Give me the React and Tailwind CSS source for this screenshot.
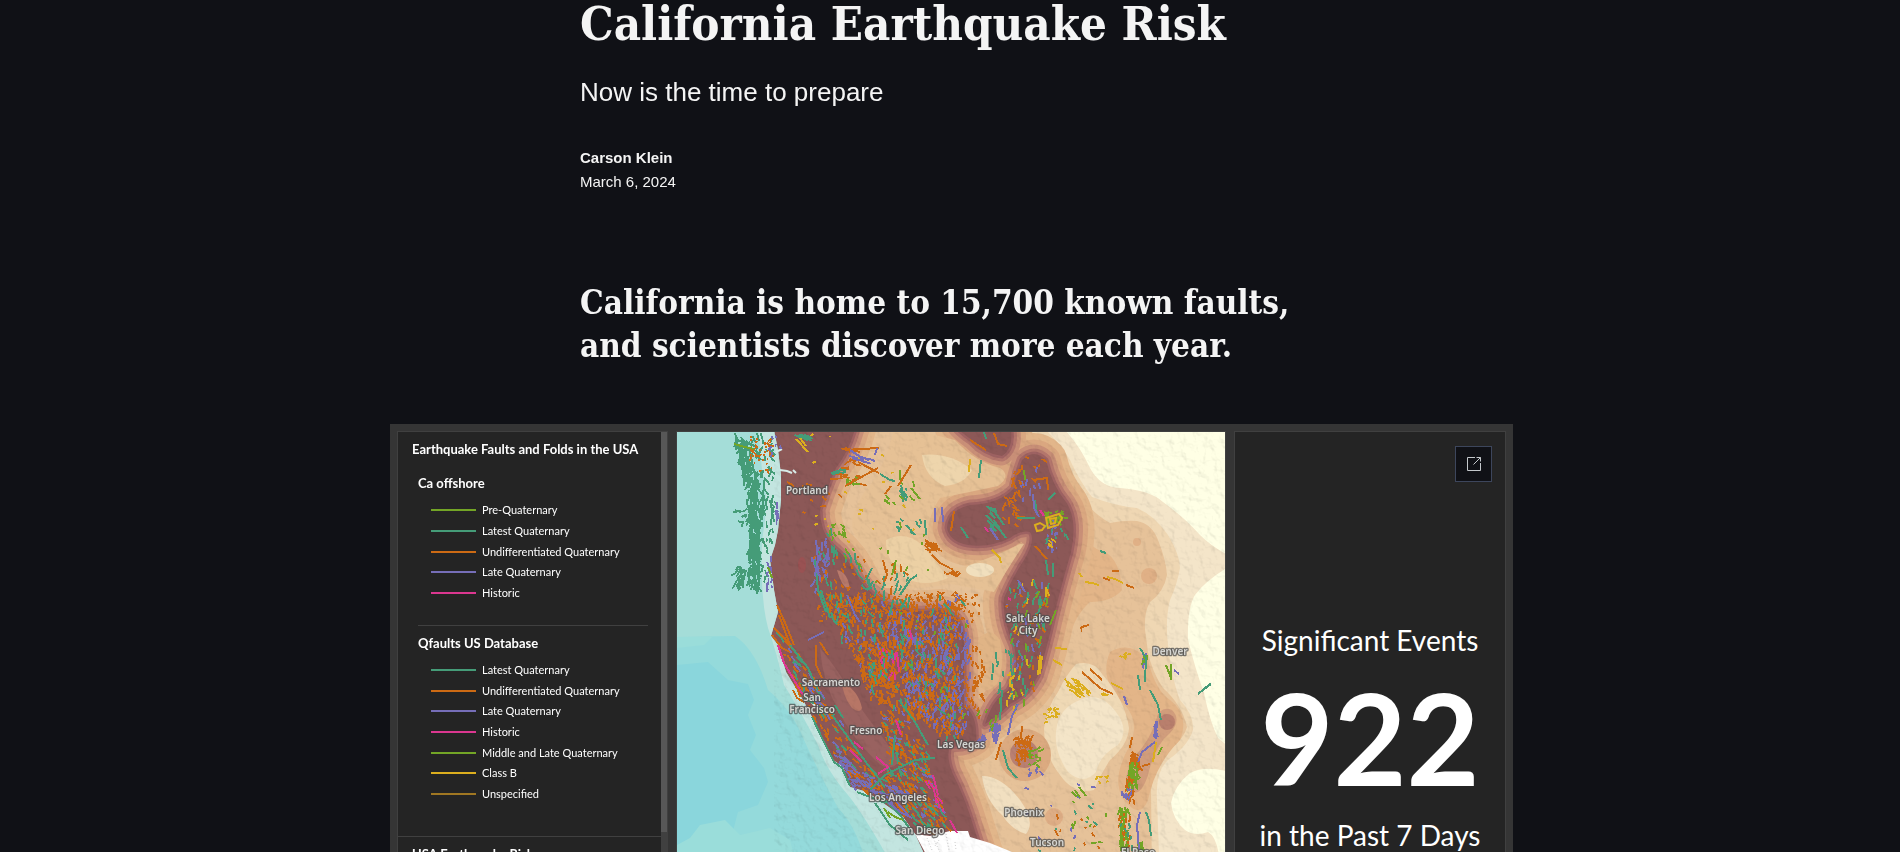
import React from "react";

const GREEN = "#459c78";
const ORANGE = "#cc6a14";
const PURPLE = "#766eb8";
const PINK = "#dc3790";
const LIME = "#73a526";
const GOLD = "#dcae1e";
const BROWN = "#a07722";

const legend = [
  {
    name: "Ca offshore",
    listHeight: "h-[103px]",
    items: [
      ["Pre-Quaternary", LIME],
      ["Latest Quaternary", GREEN],
      ["Undifferentiated Quaternary", ORANGE],
      ["Late Quaternary", PURPLE],
      ["Historic", PINK],
    ],
  },
  {
    name: "Qfaults US Database",
    listHeight: "h-[144px]",
    items: [
      ["Latest Quaternary", GREEN],
      ["Undifferentiated Quaternary", ORANGE],
      ["Late Quaternary", PURPLE],
      ["Historic", PINK],
      ["Middle and Late Quaternary", LIME],
      ["Class B", GOLD],
      ["Unspecified", BROWN],
    ],
  },
];

function makeRandom(seed) {
  let s = seed;
  return () => {
    s = (s * 16807) % 2147483647;
    return s / 2147483647;
  };
}

function inside(x, y, pts) {
  let hit = false;
  for (let i = 0, j = pts.length - 1; i < pts.length; j = i++) {
    const [xi, yi] = pts[i];
    const [xj, yj] = pts[j];
    if (yi > y !== yj > y && x < ((xj - xi) * (y - yi)) / (yj - yi) + xi) hit = !hit;
  }
  return hit;
}

const box = (x0, y0, x1, y1) => [[x0, y0], [x1, y0], [x1, y1], [x0, y1]];

const basin = [[820, 592], [870, 592], [905, 596], [940, 590], [962, 592], [956, 640], [956, 700], [962, 735], [948, 740], [925, 722], [895, 712], [872, 690], [856, 655], [835, 625]];
const basinEast = [[890, 610], [950, 615], [970, 620], [972, 700], [968, 735], [930, 720], [900, 690]];
const north = [[815, 535], [830, 525], [862, 560], [885, 600], [830, 620], [818, 580]];
const coast = [[772, 625], [790, 640], [812, 670], [830, 712], [862, 762], [910, 785], [930, 798], [934, 828], [925, 832], [885, 800], [852, 785], [834, 758], [812, 715], [788, 672], [772, 640]];
const south = [[880, 700], [905, 722], [925, 745], [935, 790], [950, 828], [925, 825], [905, 790], [885, 770]];
const wasatch = [[1005, 585], [1052, 575], [1044, 640], [1034, 690], [1008, 715], [998, 700], [1014, 660]];
const offshore = [[734, 432], [770, 432], [776, 455], [774, 520], [770, 550], [765, 590], [753, 590], [750, 520], [742, 480]];

// [colour, region, count, angle in degrees, spread, length]
const zones = [
  [GREEN, offshore, 130, 85, 40, 9],
  [GREEN, box(749, 470, 758, 585), 130, 88, 16, 12],
  [GREEN, [[735, 435], [746, 440], [756, 475], [744, 475]], 40, 80, 20, 12],
  [GREEN, box(738, 566, 746, 584), 18, 115, 25, 10],
  [GREEN, box(738, 508, 748, 530), 10, 160, 50, 6],
  [ORANGE, box(750, 436, 772, 472), 46, 20, 80, 3],
  [PURPLE, box(762, 435, 780, 455), 8, 90, 40, 5],
  [PURPLE, box(766, 555, 772, 586), 14, 85, 20, 6],
  [PURPLE, box(776, 495, 778, 520), 8, 90, 10, 6],
  [GREEN, north, 26, 75, 25, 11],
  [PURPLE, [[812, 555], [826, 535], [831, 560], [816, 590]], 26, 90, 25, 9],
  [LIME, [[830, 510], [845, 530], [862, 560], [850, 568], [828, 530]], 16, 45, 50, 6],
  [ORANGE, box(812, 555, 865, 610), 30, 80, 50, 5],
  [ORANGE, box(816, 592, 980, 622), 240, 80, 80, 3],
  [ORANGE, basin, 620, 80, 35, 6],
  [ORANGE, [[850, 640], [890, 640], [896, 690], [882, 706], [866, 690]], 170, 60, 50, 5],
  [PURPLE, basinEast, 230, 102, 25, 7],
  [PURPLE, basin, 70, 85, 30, 6],
  [GREEN, basin, 110, 75, 35, 9],
  [ORANGE, basinEast, 100, 88, 30, 5],
  [PINK, box(880, 645, 898, 680), 12, 95, 25, 7],
  [LIME, basinEast, 12, 70, 40, 6],
  [GREEN, south, 60, 55, 22, 10],
  [ORANGE, south, 140, 55, 30, 6],
  [PURPLE, south, 26, 35, 30, 6],
  [PINK, [[920, 775], [930, 780], [950, 820], [940, 815]], 8, 65, 20, 9],
  [ORANGE, coast, 120, 50, 20, 8],
  [GREEN, coast, 50, 52, 12, 12],
  [PURPLE, [[830, 735], [850, 765], [880, 782], [908, 790], [900, 800], [852, 787], [835, 760]], 70, 30, 25, 8],
  [PURPLE, [[785, 640], [815, 680], [840, 720], [830, 725], [800, 680]], 20, 55, 15, 8],
  [GREEN, wasatch, 46, 95, 25, 9],
  [PURPLE, wasatch, 18, 95, 30, 7],
  [ORANGE, wasatch, 30, 90, 40, 5],
  [LIME, wasatch, 16, 95, 30, 7],
  [GOLD, wasatch, 12, 90, 20, 8],
  [ORANGE, box(1000, 490, 1020, 525), 22, 60, 60, 7],
  [ORANGE, box(1012, 455, 1042, 486), 12, 70, 60, 6],
  [PURPLE, box(1020, 455, 1040, 510), 8, 85, 20, 7],
  [GREEN, box(984, 505, 1004, 532), 10, 55, 15, 10],
  [LIME, box(1044, 510, 1062, 522), 30, 60, 60, 5],
  [PURPLE, box(1048, 520, 1058, 550), 14, 90, 25, 6],
  [GREEN, box(1044, 522, 1066, 540), 8, 85, 30, 6],
  [GOLD, box(1048, 538, 1053, 550), 5, 60, 30, 6],
  [ORANGE, box(842, 447, 868, 486), 14, 175, 25, 11],
  [PURPLE, box(842, 454, 866, 463), 6, 20, 15, 12],
  [LIME, box(845, 475, 856, 484), 8, 45, 30, 7],
  [GREEN, box(838, 468, 850, 473), 5, 170, 15, 10],
  [GREEN, box(899, 486, 906, 500), 10, 70, 20, 7],
  [LIME, box(880, 480, 918, 502), 7, 55, 30, 7],
  [ORANGE, box(924, 542, 934, 550), 10, 25, 25, 11],
  [GREEN, box(890, 515, 920, 530), 7, 50, 40, 7],
  [LIME, box(870, 500, 930, 590), 8, 80, 60, 5],
  [ORANGE, box(865, 560, 905, 592), 12, 80, 40, 7],
  [GREEN, box(870, 570, 910, 600), 12, 100, 20, 11],
  [GOLD, box(788, 432, 860, 560), 12, 20, 60, 4],
  [GREEN, box(792, 434, 810, 438), 6, 15, 20, 12],
  [ORANGE, box(790, 480, 840, 512), 8, 50, 60, 5],
  [GOLD, box(870, 435, 920, 570), 6, 20, 60, 4],
  [ORANGE, box(972, 645, 984, 715), 34, 88, 25, 6],
  [GREEN, box(992, 645, 1016, 695), 16, 95, 20, 9],
  [PURPLE, box(992, 722, 1000, 736), 20, 100, 30, 8],
  [PURPLE, box(980, 732, 992, 740), 8, 120, 20, 8],
  [LIME, box(960, 705, 1005, 730), 8, 115, 30, 7],
  [GOLD, box(1008, 668, 1016, 700), 12, 120, 50, 6],
  [ORANGE, box(1016, 735, 1030, 760), 50, 75, 60, 6],
  [LIME, box(1026, 750, 1038, 766), 14, 30, 70, 6],
  [PURPLE, box(1028, 767, 1040, 773), 6, 60, 60, 5],
  [GOLD, [[1064, 674], [1078, 680], [1094, 692], [1078, 694], [1064, 694]], 22, 38, 15, 9],
  [GOLD, box(1046, 707, 1060, 722), 20, 160, 60, 4],
  [GOLD, box(1100, 690, 1106, 696), 5, 30, 40, 6],
  [GOLD, box(1122, 650, 1132, 658), 7, 150, 50, 4],
  [ORANGE, box(1130, 752, 1140, 766), 45, 75, 60, 6],
  [LIME, box(1128, 762, 1138, 785), 55, 88, 30, 8],
  [ORANGE, box(1126, 775, 1134, 800), 18, 90, 25, 6],
  [PURPLE, box(1122, 787, 1132, 796), 12, 90, 40, 5],
  [LIME, box(1120, 807, 1128, 846), 46, 92, 18, 8],
  [ORANGE, box(1119, 807, 1130, 846), 16, 92, 25, 5],
  [GREEN, box(1121, 807, 1132, 846), 9, 92, 25, 6],
  [LIME, box(1138, 840, 1143, 850), 16, 85, 25, 6],
  [PURPLE, box(1155, 720, 1158, 736), 16, 95, 15, 7],
  [PURPLE, box(1142, 652, 1146, 664), 8, 80, 30, 6],
  [LIME, box(1143, 655, 1147, 668), 6, 85, 20, 6],
  [GOLD, box(1096, 776, 1110, 784), 7, 120, 50, 4],
  [LIME, box(1065, 800, 1110, 850), 8, 60, 60, 5],
  [ORANGE, box(1050, 800, 1100, 850), 8, 40, 60, 5],
  [PURPLE, box(1020, 780, 1115, 850), 9, 60, 60, 4],
  [GREEN, box(1030, 800, 1110, 850), 8, 80, 50, 5],
  [ORANGE, box(1080, 625, 1084, 628), 4, 20, 60, 5],
  [ORANGE, box(942, 571, 958, 575), 9, 20, 50, 5],
];

function buildFaults() {
  const rnd = makeRandom(4271);
  return zones.map(([color, pts, count, angle, spread, length]) => {
    const xs = pts.map((p) => p[0]);
    const ys = pts.map((p) => p[1]);
    const x0 = Math.min(...xs);
    const y0 = Math.min(...ys);
    const w = Math.max(...xs) - x0;
    const h = Math.max(...ys) - y0;
    let d = "";
    let made = 0;
    for (let tries = 0; made < count && tries < count * 12; tries++) {
      const x = x0 + rnd() * w;
      const y = y0 + rnd() * h;
      if (!inside(x, y, pts)) continue;
      const a = ((angle + (rnd() - 0.5) * 2 * spread) * Math.PI) / 180;
      const l = length * (0.4 + rnd() * 0.8);
      const bend = (rnd() - 0.5) * 0.9;
      const mx = (Math.cos(a) * l) / 2;
      const my = (Math.sin(a) * l) / 2;
      const ex = (Math.cos(a + bend) * l) / 2;
      const ey = (Math.sin(a + bend) * l) / 2;
      d += `M${x.toFixed(1)} ${y.toFixed(1)}l${mx.toFixed(1)} ${my.toFixed(1)}l${ex.toFixed(1)} ${ey.toFixed(1)}`;
      made++;
    }
    return { color, d };
  });
}

const faults = buildFaults();

const traces = [
  [GREEN, "M735 433L740 455L745 475M741 437L750 452M737 440L755 446M744 452L752 474M751 500L752 540L756 590M758 520L759 586M764 480L762 520M770 500L774 522M740 566L743 588M746 570L742 586"],
  [LIME, "M734 444L745 447L754 449M768 567L772 578M911 488L920 499"],
  [GOLD, "M796 439L808 452M800 438L806 446M970 459L969 472M1085 582L1092 583L1099 585M1079 573L1082 577M992 550L1000 558L1001 563M1055 648L1067 649M1053 660L1062 665M1111 683L1123 689M1040 655L1038 675M1042 656L1040 674M1046 587L1046 597M1156 742L1153 762M1107 577L1115 579L1123 583"],
  [ORANGE, "M845 450L879 448M845 448L860 452M845 486L878 468M858 462L879 473M898 486L911 465M885 494L891 486M787 482L794 486M954 511L951 531M970 440L986 450M994 433L998 444L1007 446M1012 478L1016 489M1014 477L1012 487M1033 480L1047 478L1048 490M925 540L940 550M932 555L940 563L950 568M951 568L957 576L960 573M1035 546L1047 559M1103 578L1110 580M1126 585L1134 588M1112 571L1119 571M777 605L786 625L794 645M779 615L790 645M883 560L887 575L884 582M816 645L816 665L822 678M820 642L828 655M1082 672L1100 688L1113 694M1090 669L1102 680M793 690L797 698L804 702M797 686L800 697M1132 737L1130 748M1001 742L996 760M1055 830L1058 836M772 635L782 648L790 652M774 628L788 642M1022 726L1021 738L1026 745M1033 735L1027 748M1142 766L1150 764"],
  [GREEN, "M880 474L890 480L895 481M901 485L905 500M906 525L915 535M925 520L926 535M872 568L866 580M900 595L910 580L917 575M984 432L986 439M981 460L979 478M986 515L1000 530L1006 538M992 508L1004 525M961 527L968 538M1035 500L1037 515M1048 500L1055 493M1046 560L1048 575M1053 563L1053 577M1100 551L1106 553M1017 518L1035 518M1198 694L1210 684M1203 690L1211 684M1150 690L1158 705L1161 720M1140 648L1146 658L1145 682M1146 812L1149 820L1151 836M1003 750L1008 768L1017 778M1002 690L1000 720M895 735L892 765M870 790L885 775L915 760L935 758M899 700L915 722L928 745M790 645L808 668L818 690M812 717L824 742L834 762L842 768L850 786M832 715L850 740L868 765L880 780M875 803L890 825L908 840M885 800L900 815L912 832M857 792L870 797L885 803M835 705L843 718M1140 690L1138 675M893 600L890 615M815 560L818 590L826 612M821 590L830 618"],
  [PURPLE, "M850 450L862 458L874 460M877 448L875 455M1033 494L1034 508L1039 517M935 508L935 522M942 507L943 522M1174 670L1179 674M1124 696L1127 705M1140 812L1137 825L1139 850M1155 742L1142 752L1138 762M1018 704L1012 716L1008 735M1018 580L1025 592M990 528L998 540M888 802L900 812L912 818M895 800L908 815M847 595L855 615L860 622M808 640L824 632M816 540L818 560L815 575"],
  [PINK, "M778 645L784 663L794 680L803 695M1040 510L1044 516M985 527L988 532M897 652L899 672M854 742L863 749M850 750L862 762M876 757L888 767L878 774M896 720L901 735M910 630L912 640M950 820L957 833M933 775L938 795M1008 598L1011 600"],
  [LIME, "M900 470L900 480M884 500L890 504M896 560L892 575M1024 470L1025 480M888 812L895 817L903 820M884 808L890 818M1166 665L1171 678M1171 664L1171 680M1162 747L1158 755M1075 790L1080 798M1079 787L1086 796M1072 792L1077 797M1056 610L1050 625"],
];

const cities = [
  ["Portland", 807, 494],
  ["Salt Lake", 1028, 622],
  ["City", 1028, 634],
  ["Denver", 1170, 655],
  ["Sacramento", 831, 686],
  ["San", 812, 701],
  ["Francisco", 812, 713],
  ["Fresno", 866, 734],
  ["Las Vegas", 961, 748],
  ["Los Angeles", 898, 801],
  ["Phoenix", 1024, 816],
  ["San Diego", 920, 834],
  ["Tucson", 1047, 846],
  ["El Paso", 1138, 856],
];

const DARK = [
  "M765 425L856 425Q850 450 836 468Q826 490 820 510Q820 530 832 545Q850 560 860 580Q872 596 888 604Q905 614 940 610Q962 612 964 640L964 705Q978 716 976 740Q965 748 950 746Q946 756 952 772Q966 800 974 828L985 862L760 862Z",
  "M985 724Q992 700 1008 690Q1020 672 1014 645Q1002 620 1004 598Q1012 578 1024 560Q1036 540 1030 532Q1020 530 1010 538Q990 548 968 545Q950 542 947 528Q948 510 970 505Q1000 504 1014 488Q1018 470 1022 460Q1034 448 1046 460Q1052 485 1066 502Q1078 520 1071 552Q1060 590 1053 620Q1046 652 1038 676Q1028 696 1010 704Q998 716 985 724Z",
  "M955 425L1010 425Q1015 448 1002 456Q985 454 972 440Q960 432 955 425Z",
];

function FaultMap() {
  return (
    <svg
      role="img"
      aria-label="Map of faults in the western United States"
      viewBox="677 432 548 440"
      className="block aspect-[548/440] w-full"
    >
      <defs>
        <filter id="relief" x="0" y="0" width="100%" height="100%">
          <feTurbulence type="fractalNoise" baseFrequency="0.11" numOctaves="4" seed="8" />
          <feDiffuseLighting lightingColor="#ffffff" surfaceScale="2.6" diffuseConstant="1.15">
            <feDistantLight azimuth="315" elevation="60" />
          </feDiffuseLighting>
        </filter>
      </defs>

      <rect x="677" y="432" width="548" height="440" fill="#e6c299" />

      <path fill="#efd7b3" d="M1015 425Q1040 440 1057 452Q1070 468 1077 485Q1086 510 1110 523Q1125 520 1137 521Q1152 524 1158 540Q1166 560 1167 575Q1164 592 1150 602Q1144 612 1145 630L1148 652Q1152 672 1163 688Q1182 705 1187 727Q1184 738 1170 750Q1154 765 1151 790L1152 880L1230 880L1230 425Z" />
      <path fill="#f4e5c9" d="M1040 425Q1058 440 1070 460Q1080 482 1092 497Q1115 506 1137 508Q1155 516 1168 535Q1180 555 1180 568Q1177 585 1170 600Q1165 620 1168 645Q1172 680 1180 700Q1194 715 1193 730Q1188 746 1168 760Q1155 772 1157 800L1160 880L1230 880L1230 425Z" />
      <path fill="#ffffe5" d="M1060 425Q1078 442 1090 468Q1100 487 1120 488Q1150 490 1163 502Q1185 518 1200 535Q1212 547 1230 556L1230 425Z" />
      <path fill="#ffffe5" d="M1230 566Q1206 580 1195 595Q1187 608 1188 640Q1195 668 1204 693Q1210 722 1218 738L1230 748Z" />
      <path fill="#ffffe5" d="M1230 772Q1205 765 1190 773Q1174 786 1171 803Q1173 820 1185 830Q1195 837 1208 832Q1220 838 1221 880L1230 880Z" />

      <path fill="#e3b588" d="M1080 520Q1085 548 1105 552Q1120 560 1122 590Q1112 602 1090 602Q1075 615 1068 640Q1060 655 1050 665L1060 600Z" />
      <path fill="#e3b588" d="M1110 652Q1130 640 1148 660Q1155 690 1170 700Q1190 715 1180 740Q1155 765 1148 800Q1140 820 1124 800Q1110 780 1130 745Q1140 722 1125 705Q1098 680 1110 652Z" />
      <path fill="#d19d7c" d="M1128 790Q1122 775 1136 755Q1150 740 1156 720Q1160 705 1172 710Q1182 720 1170 733Q1155 745 1148 775Q1140 800 1128 790Z" />
      <circle cx="1167" cy="722" r="8" fill="#b97f6d" />
      <circle cx="1149" cy="576" r="8" fill="#e0b086" />
      <circle cx="1137" cy="542" r="4" fill="#e0b086" />

      <path fill="#efd9b5" d="M1076 664Q1094 660 1102 674Q1125 700 1129 728Q1128 745 1110 760Q1100 775 1094 790Q1074 795 1060 775Q1044 755 1044 728Q1048 705 1058 692Q1066 675 1076 664Z" />
      <path fill="#f4e5c8" d="M1080 700Q1100 690 1116 712Q1130 730 1118 745Q1100 755 1096 772Q1084 786 1068 772Q1054 752 1056 732Q1058 708 1080 700Z" />
      <path fill="#f1dfc0" d="M982 776Q1002 776 1020 800Q1036 822 1026 834Q1012 830 1002 815Q985 800 982 776Z" />
      <circle cx="1025" cy="755" r="26" fill="#dcaa80" />
      <circle cx="1024" cy="754" r="14" fill="#b98072" />
      <circle cx="1054" cy="817" r="9" fill="#dfae86" />

      <g fill="none" strokeLinejoin="round">
        {[
          ["#e2b68a", 42],
          ["#daa780", 29],
          ["#c98f77", 19],
          ["#b4766c", 11],
          ["#9e6262", 5],
        ].map(([color, width]) =>
          DARK.map((d) => <path key={color + d} d={d} stroke={color} strokeWidth={width} />)
        )}
      </g>
      <path fill="#e6c195" d="M895 425L955 440Q975 462 1000 468Q1012 476 998 486Q970 492 940 498Q925 520 928 545Q935 562 960 568Q990 558 1008 550Q1022 542 1024 544Q1008 568 994 592Q975 588 950 584Q915 590 885 588Q875 560 855 535Q846 520 866 490Q885 470 895 425Z" />
      <path fill="#eed5ac" d="M922 455Q950 452 972 470Q965 484 945 486Q925 478 922 455Z" />
      <path fill="#ecd0a4" d="M886 540Q905 530 922 545Q935 560 948 578Q925 588 905 578Q885 560 886 540Z" />
      <ellipse cx="980" cy="570" rx="14" ry="7" fill="#f1dfbd" />
      <path fill="#e0b486" d="M978 640Q990 625 1000 640Q1005 668 997 684Q983 698 978 680Z" />

      <g fill="#8c5857">
        {DARK.map((d) => (
          <path key={d} d={d} />
        ))}
      </g>
      <path fill="#996260" d="M820 648Q840 672 855 700Q880 735 900 760Q890 775 875 760Q850 735 838 710Q822 680 820 648Z" />
      <path fill="#b77666" d="M842 682Q858 690 862 708Q860 714 852 708Q843 697 842 682Z" />
      <path fill="#b97a6b" d="M837 570Q848 572 850 590Q842 588 837 570Z" />
      <ellipse cx="802" cy="565" rx="4" ry="8" fill="#9a5253" />

      <path fill="#a4ddd8" d="M670 425L773 425L778 450L781 475L781 500L778 530L775 545L770 560L774 590L778 612L771 636L778 645L786 672L803 700L812 717L822 740L833 760L843 767L850 787L867 792L883 803L903 817L915 834L936 880L670 880Z" />
      <path fill="#c3e5e0" d="M758 425L773 425L778 450L781 475L781 500L778 530L775 545L770 560L774 590L778 612L771 636L778 645L786 672L803 700L812 717L822 740L833 760L843 767L850 787L867 792L883 803L903 817L915 834L936 880L900 880Q868 820 848 795Q826 770 818 745Q800 710 784 685Q776 650 768 628Q760 598 762 540Q770 500 762 470Z" />
      <path fill="#94dadb" d="M677 637L735 636Q756 650 768 690Q792 710 804 740Q820 775 838 808Q860 830 870 880L670 880Z" />
      <path fill="#8ad6dc" d="M677 665L708 662L728 680L748 684L754 700L748 715L756 735L750 750L764 768L768 782L758 805L738 812L732 835L720 880L677 880Z" />
      <path fill="#9addda" d="M677 637L712 637L704 645L677 648ZM677 845L690 838L700 825L725 820L740 835L770 828L790 840L800 880L677 880Z" />
      <path fill="none" stroke="#d7ece8" strokeWidth="2" d="M776 452L782 449M780 470L787 471L792 473M793 470L796 473M810 700L815 706" />
      <path fill="#ffffff" d="M915 834L930 836L950 831L968 831L970 837L990 843L1012 852L1040 880L940 880Z" />
      <path fill="none" stroke="#cfcfcf" strokeWidth="1" strokeDasharray="1 2" d="M927 838L932 850M933 838L940 852M946 834L949 850M939 840L935 846M955 842L956 850" />

      <rect x="774" y="432" width="451" height="440" filter="url(#relief)" opacity="0.28" className="mix-blend-multiply" />

      <g fill="none" strokeWidth="1.8" shapeRendering="crispEdges">
        {faults.map((f, i) => (
          <path key={i} d={f.d} stroke={f.color} />
        ))}
      </g>
      <g fill="none" strokeWidth="2" shapeRendering="crispEdges">
        {traces.map(([color, d], i) => (
          <path key={i} d={d} stroke={color} />
        ))}
      </g>
      <g fill="none" stroke={GOLD} strokeWidth="2">
        <path d="M1035 525L1040 523L1045 526L1042 530L1037 531ZM1046 518L1059 514L1062 518L1058 525L1048 528ZM1050 519L1056 518L1055 523L1051 524Z" />
      </g>

      <g
        fill="#d6d6d2"
        stroke="#4d4d4d"
        strokeOpacity="0.75"
        strokeWidth="2.5"
        strokeLinejoin="round"
        textAnchor="middle"
        className="font-['Noto_Sans',sans-serif] text-[10px] font-semibold [paint-order:stroke]"
      >
        {cities.map(([name, x, y]) => (
          <text key={name} x={x} y={y}>
            {name}
          </text>
        ))}
      </g>
    </svg>
  );
}

function LegendGroup({ name, listHeight, items }) {
  return (
    <section>
      <h3 className="text-[13px] leading-4 font-bold">{name}</h3>
      <ul className={`mt-[9px] flex flex-col justify-between pl-[13px] ${listHeight}`}>
        {items.map(([label, color]) => (
          <li key={label} className="flex h-5 items-center gap-[6px] text-[11px] leading-5">
            <span className="h-[2px] w-[45px]" style={{ backgroundColor: color }} />
            {label}
          </li>
        ))}
      </ul>
    </section>
  );
}

export default function App() {
  return (
    <main className="h-screen overflow-hidden bg-[#101116] font-['Liberation_Sans',Arial,sans-serif] text-[#f4f4f4]">
      <header className="mx-auto max-w-[740px]">
        <h1 className="font-['DejaVu_Serif_Condensed','DejaVu_Serif',serif] text-[47px] leading-[48px] font-bold whitespace-nowrap">
          California Earthquake Risk
        </h1>
        <p className="mt-7 text-[26px] leading-8">Now is the time to prepare</p>
        <address className="mt-[38px] text-[15px] leading-6 font-bold not-italic">Carson Klein</address>
        <time dateTime="2024-03-06" className="block text-[15px] leading-6">
          March 6, 2024
        </time>
        <h2 className="mt-[87px] font-['DejaVu_Serif_Condensed','DejaVu_Serif',serif] text-[33px] leading-[43px] font-bold">
          California is home to 15,700 known faults, and scientists discover more each year.
        </h2>
      </header>

      <div className="mx-auto mt-[57px] max-w-[1126px] pl-[3px] font-['Lato',sans-serif] text-white">
        <div className="grid h-[620px] grid-cols-[271px_minmax(0,1fr)_272px] gap-2 bg-[#353535] p-[7px]">
          <aside className="flex overflow-hidden border border-[#404040] bg-[#242424]">
            <div className="min-w-0 flex-1">
              <h2 className="pt-[9px] pl-[14px] text-[13px] leading-4 font-bold whitespace-nowrap">
                Earthquake Faults and Folds in the USA
              </h2>
              <div className="mt-[18px] mr-[13px] ml-5">
                <LegendGroup {...legend[0]} />
                <hr className="mt-[22px] mb-[9px] border-[#404040]" />
                <LegendGroup {...legend[1]} />
              </div>
              <hr className="mt-8 mb-[9px] border-[#404040]" />
              <h2 className="pl-[14px] text-[13px] leading-4 font-bold">USA Earthquake Risk</h2>
            </div>
            <div className="w-[6px] bg-[#404040]">
              <div className="h-[400px] bg-[#575757]" />
            </div>
          </aside>

          <section className="overflow-hidden border border-[#404040]">
            <FaultMap />
          </section>

          <section className="relative border border-[#404040] bg-[#242424] pt-[190px] text-center">
            <a
              href="#expand"
              aria-label="Open in a new window"
              className="absolute top-[14px] right-[13px] flex h-9 w-[37px] items-center justify-center border border-[#3d465c] bg-[#101116]"
            >
              <svg viewBox="0 0 16 16" className="size-4" fill="none" stroke="#c4c8cc">
                <path d="M9 1.5H1.5v13h13V7M7.5 8.5l7-7M10.5 1.5h4v4" />
              </svg>
            </a>
            <p className="text-[28px] leading-9">Significant Events</p>
            <p className="text-[126px] leading-[159px] font-bold">922</p>
            <p className="text-[28px] leading-9">in the Past 7 Days</p>
          </section>
        </div>
      </div>
    </main>
  );
}
